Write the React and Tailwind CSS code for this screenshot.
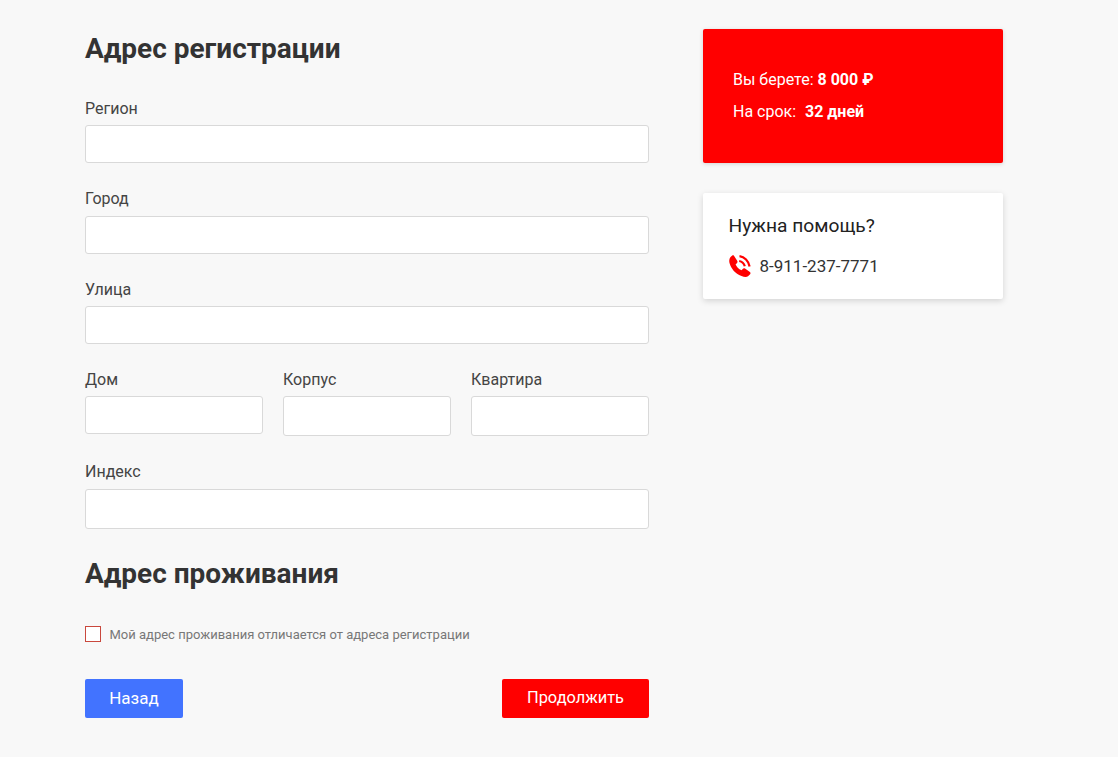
import React from 'react';

const PhoneIcon = () => (
  <svg viewBox="0 0 22 22" className="h-[22px] w-[22px] shrink-0 text-[#ff0000]" fill="currentColor">
    <path d="M4.8 .6 8.2 5.8C8.7 6.7 8.5 7.6 7.9 8.2L6.6 9.2C7.4 11.8 9.6 14 12.6 15.2L13.7 13.9C14.3 13.2 15.3 13.1 16 13.6L20.9 17C21.6 17.5 21.7 18.6 21.1 19.3L19 21.2C17.5 22.4 15 22 12.5 21 6 18.5 2 13.5.5 8-.1 5.5.3 3.5 1.5 2L3 .7C3.6.2 4.4.1 4.8.6Z" />
    <path d="M10.5 1.2C15.5 1.8 19.6 6 20.6 11.5" fill="none" stroke="currentColor" strokeWidth="2.2" />
    <path d="M10.2 6C12.8 6.4 15 8.4 15.8 11.2" fill="none" stroke="currentColor" strokeWidth="2.2" />
  </svg>
);

const Field = ({ label, inputClass = 'h-[38px]', className = '' }) => (
  <div className={className}>
    <label className="block text-[16px] leading-[19px] text-[#444]">{label}</label>
    <input type="text" className={`mt-[7.6px] block w-full rounded-[3px] border border-[#d9d9d9] bg-white ${inputClass}`} />
  </div>
);

export default function App() {
  return (
    <div className="min-h-[757px] bg-[#f8f8f8] font-['Roboto',sans-serif]">
      <div className="flex items-start gap-[54px] pl-[85px] pt-[29px]">
        {/* Form */}
        <div className="w-[564px]">
          <h2 className="text-[28px] font-bold leading-[40px] text-[#333]">Адрес регистрации</h2>
          <Field label="Регион" className="mt-[29.6px]" />
          <Field label="Город" className="mt-[26px]" />
          <Field label="Улица" className="mt-[25.8px]" />
          <div className="mt-[25.6px] flex items-start gap-5">
            <Field label="Дом" className="w-[178px]" />
            <Field label="Корпус" className="w-[168px]" inputClass="h-[40px]" />
            <Field label="Квартира" className="w-[178px]" inputClass="h-[40px]" />
          </div>
          <Field label="Индекс" className="mt-[25.9px]" inputClass="h-[40px]" />
          <h2 className="mt-[25px] text-[28px] font-bold leading-[40px] text-[#333]">Адрес проживания</h2>
          <label className="mt-[32px] flex items-center gap-[8.5px]">
            <span className="h-[16px] w-[16px] border border-[#c9483d] bg-white" />
            <span className="mt-[1px] text-[13px] leading-[16px] text-[#777]">Мой адрес проживания отличается от адреса регистрации</span>
          </label>
          <div className="mt-[36px] flex justify-between">
            <button className="h-[39px] w-[98px] rounded-[2px] bg-[#4273ff] text-[17px] text-white">Назад</button>
            <button className="h-[39px] w-[147px] rounded-[2px] bg-[#ff0000] text-[16.4px] text-white">Продолжить</button>
          </div>
        </div>

        {/* Sidebar */}
        <div className="w-[300px]">
          <div className="h-[134px] rounded-[2px] bg-[#ff0000] px-[30px] pt-[35px] text-[16px] leading-[32px] text-white shadow-[0_1px_4px_rgba(0,0,0,0.15)]">
            <p className="h-[32px]">Вы берете: <b className="font-bold">8 000 ₽</b></p>
            <p>На срок:&nbsp; <b className="ml-[1px] font-bold">32 дней</b></p>
          </div>
          <div className="mt-[30px] h-[106px] rounded-[2px] bg-white px-[25.5px] pt-[20px] shadow-[0_2px_6px_rgba(0,0,0,0.15)]">
            <h3 className="text-[19.2px] leading-[26px] text-[#222]">Нужна помощь?</h3>
            <div className="mt-[15px] flex items-center gap-[9px] text-[17px] leading-[24px] text-[#333]">
              <PhoneIcon />
              <span>8-911-237-7771</span>
            </div>
          </div>
        </div>
      </div>
    </div>
  );
}
